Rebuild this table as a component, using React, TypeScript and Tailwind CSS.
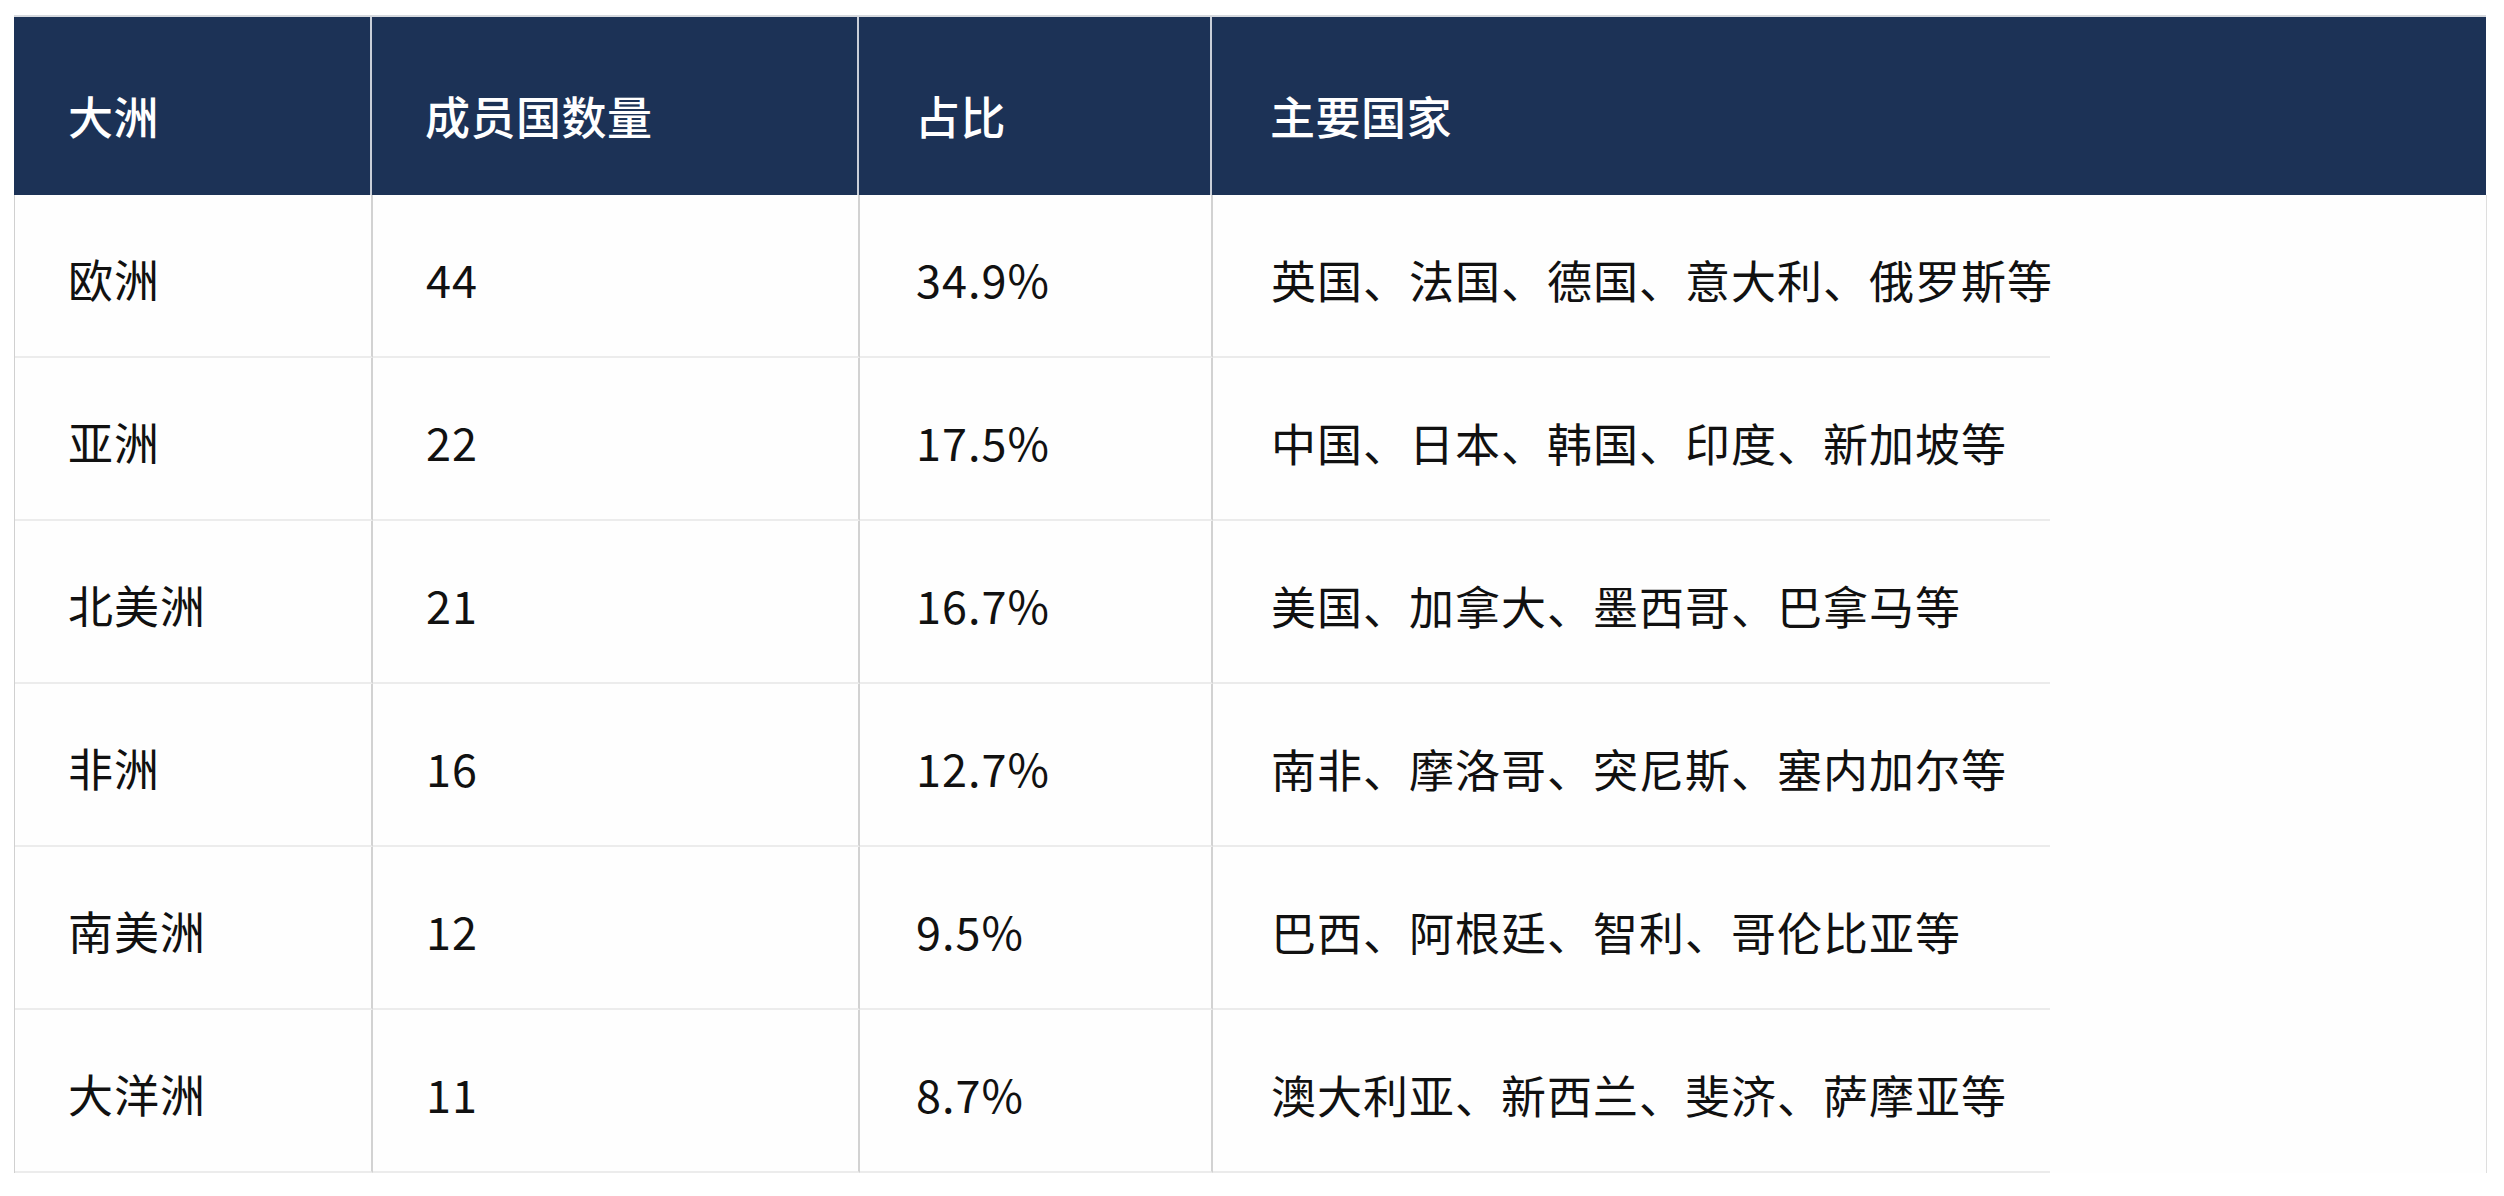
import React from "react";

const rows = [
  { c: "欧洲", n: "44", p: "34.9%", m: "英国、法国、德国、意大利、俄罗斯等" },
  { c: "亚洲", n: "22", p: "17.5%", m: "中国、日本、韩国、印度、新加坡等" },
  { c: "北美洲", n: "21", p: "16.7%", m: "美国、加拿大、墨西哥、巴拿马等" },
  { c: "非洲", n: "16", p: "12.7%", m: "南非、摩洛哥、突尼斯、塞内加尔等" },
  { c: "南美洲", n: "12", p: "9.5%", m: "巴西、阿根廷、智利、哥伦比亚等" },
  { c: "大洋洲", n: "11", p: "8.7%", m: "澳大利亚、新西兰、斐济、萨摩亚等" },
];

export default function App() {
  return (
    <div
      className="w-[2504px] h-[1196px] bg-white pt-[15px] pl-[14px] overflow-hidden"
      style={{ fontFamily: '"Noto Sans CJK SC", "Noto Sans", sans-serif' }}
    >
      <div className="w-[2472px] border-t-2 border-[#d6d9de]">
        <div className="grid grid-cols-[358px_487px_353px_1274px] h-[178px] bg-[#1c3256] text-white text-[45px] font-medium tracking-[0.5px] leading-none">
          <div className="flex items-center pl-[54px] pt-[18px] border-r-2 border-[#c9cfd8]">大洲</div>
          <div className="flex items-center pl-[53px] pt-[18px] border-r-2 border-[#c9cfd8]">成员国数量</div>
          <div className="flex items-center pl-[56px] pt-[18px] border-r-2 border-[#c9cfd8]">占比</div>
          <div className="flex items-center pl-[58px] pt-[18px]">主要国家</div>
        </div>
        {rows.map((r, i) => (
          <div
            key={i}
            className="grid grid-cols-[358px_487px_353px_1274px] h-[163px] text-[45px] tracking-[1px] leading-none text-[#111111] border-l border-[#d0d0d0]"
          >
            <div className="flex items-center pl-[53px] pt-[6px] border-r-2 border-b-2 border-[#d2d2d2] border-b-[#ececec] bg-[#fefefe]">
              {r.c}
            </div>
            <div className="flex items-center pl-[53px] pt-[6px] border-r-2 border-b-2 border-[#d2d2d2] border-b-[#ececec] bg-[#fefefe]">
              {r.n}
            </div>
            <div className="flex items-center pl-[56px] pt-[6px] border-r-2 border-b-2 border-[#d2d2d2] border-b-[#ececec] bg-[#fefefe]">
              {r.p}
            </div>
            <div className="flex items-center pl-[58px] pt-[6px] border-r border-[#dedede] bg-[#fefefe] bg-[linear-gradient(#ebebeb,#ebebeb)] bg-no-repeat bg-[length:837px_2px] bg-bottom-left">
              {r.m}
            </div>
          </div>
        ))}
      </div>
    </div>
  );
}
